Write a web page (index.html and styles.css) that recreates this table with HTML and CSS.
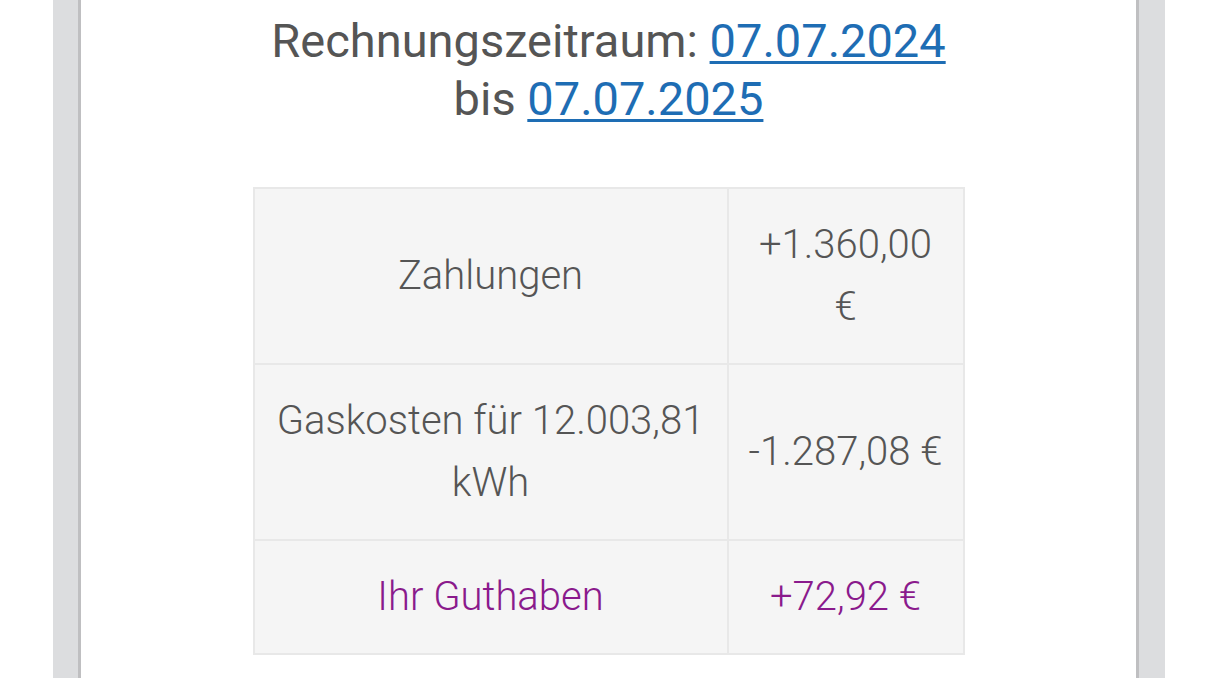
FILE: index.html
```html
<!DOCTYPE html>
<html lang="de">
<head>
<meta charset="utf-8">
<link rel="stylesheet" href="styles.css">
</head>
<body>
<div class="page">
  <div class="side side-left"></div>
  <main class="content">
    <h1 class="period">Rechnungszeitraum: <a href="#">07.07.2024</a><br>bis <a href="#">07.07.2025</a></h1>
    <table class="bill">
      <colgroup>
        <col class="col-label">
        <col class="col-amount">
      </colgroup>
      <tr>
        <td class="label">Zahlungen</td>
        <td class="amount">+1.360,00 €</td>
      </tr>
      <tr>
        <td class="label">Gaskosten für 12.003,81 kWh</td>
        <td class="amount">-1.287,08 €</td>
      </tr>
      <tr class="total">
        <td class="label">Ihr Guthaben</td>
        <td class="amount">+72,92 €</td>
      </tr>
    </table>
  </main>
  <div class="side side-right"></div>
</div>
</body>
</html>
```
FILE: styles.css
```css
html, body {
  margin: 0;
  padding: 0;
  background: #ffffff;
  height: 100%;
  overflow: hidden;
}
.page {
  display: flex;
  height: 678px;
  padding: 0 53px;
  box-sizing: border-box;
}
.side {
  width: 25px;
  background: #dcdddf;
}
.side-left {
  border-right: 3px solid #bfbfc1;
}
.side-right {
  width: 26px;
  border-left: 3px solid #bfbfc1;
}
.content {
  flex: 1;
  background: #ffffff;
  display: flex;
  flex-direction: column;
  align-items: center;
  font-family: Roboto, "Liberation Sans", sans-serif;
}
.period {
  margin: 12px 0 0;
  font-size: 47px;
  line-height: 58px;
  font-weight: 400;
  color: #555555;
  text-align: center;
}
.period a {
  color: #1e6db4;
  text-decoration: underline;
  text-decoration-thickness: 3px;
  text-underline-offset: 4px;
}
.bill {
  margin-top: 59px;
  border-collapse: collapse;
  table-layout: fixed;
  width: 710px;
  background: #f5f5f5;
  font-size: 40px;
  line-height: 62px;
  font-weight: 300;
  color: #555555;
  text-align: center;
}
.col-label {
  width: 474px;
}
.col-amount {
  width: 236px;
}
.bill td {
  border: 2px solid #e8e8e8;
  padding: 25px 14px;
  vertical-align: middle;
}
.bill .amount {
  padding: 25px 18px;
}
.total td {
  color: #8a1a8c;
}
```
